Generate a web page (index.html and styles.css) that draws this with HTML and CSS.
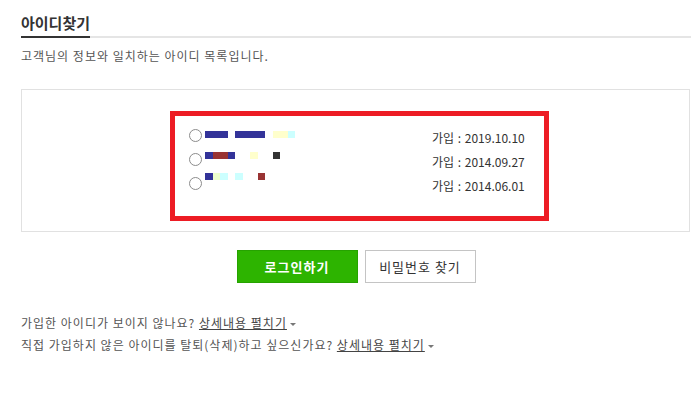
FILE: index.html
```html
<!DOCTYPE html>
<html>
<head>
  <title>아이디찾기</title>
  <link rel="stylesheet" href="styles.css">
</head>
<body>
  <div class="wrap">
    <div class="title-bar">
      <h2 class="title">아이디찾기</h2>
    </div>
    <p class="desc">고객님의 정보와 일치하는 아이디 목록입니다.</p>

    <div class="result-box">
      <div class="id-list">
        <div class="radios">
          <input type="radio" name="userId" class="pick">
          <input type="radio" name="userId" class="pick">
          <input type="radio" name="userId" class="pick">
        </div>

        <!-- masked ids -->
        <div class="mosaic">
          <div class="m-row">
            <span class="c b"></span><span class="c b"></span><span class="c b"></span><span class="c"></span>
            <span class="c b"></span><span class="c b"></span><span class="c b"></span><span class="c b"></span>
            <span class="c"></span><span class="c y"></span><span class="c y"></span><span class="c a"></span>
          </div>
          <div class="m-row">
            <span class="c b"></span><span class="c r"></span><span class="c r"></span><span class="c b"></span>
            <span class="c"></span><span class="c"></span><span class="c y"></span><span class="c"></span>
            <span class="c"></span><span class="c k"></span>
          </div>
          <div class="m-row">
            <span class="c b"></span><span class="c g"></span><span class="c a"></span><span class="c"></span>
            <span class="c a"></span><span class="c"></span><span class="c"></span><span class="c r"></span>
          </div>
        </div>

        <ul class="dates">
          <li>가입 : 2019.10.10</li>
          <li>가입 : 2014.09.27</li>
          <li>가입 : 2014.06.01</li>
        </ul>
      </div>
    </div>

    <div class="buttons">
      <button type="button" class="btn btn-login">로그인하기</button>
      <button type="button" class="btn btn-pw">비밀번호 찾기</button>
    </div>

    <div class="help">
      <p>가입한 아이디가 보이지 않나요? <a href="#" class="more">상세내용 펼치기</a></p>
      <p>직접 가입하지 않은 아이디를 탈퇴(삭제)하고 싶으신가요? <a href="#" class="more">상세내용 펼치기</a></p>
    </div>
  </div>
</body>
</html>
```

FILE: styles.css
```css
body {
  margin: 0;
  padding: 0;
  background-color: #FFFFFF;
  font-family: "Noto Sans CJK KR", "Noto Sans", sans-serif;
  font-size: 12px;
  color: #555555;
}

.wrap {
  padding: 0 6px 0 21px;
}

.title-bar {
  border-bottom: 2px solid #E5E5E5;
}

.title {
  display: inline-block;
  margin: 0 0 -2px 0;
  padding: 13px 0 3px 0;
  font-size: 15px;
  line-height: 20px;
  letter-spacing: 0;
  font-weight: bold;
  color: #333333;
  border-bottom: 2px solid #333333;
}

.desc {
  margin: 9px 0 0 0;
  line-height: 18px;
  letter-spacing: 1px;
}

.result-box {
  margin: 24px 1px 0 0;
  padding: 21px 140px 10px 148px;
  border: 1px solid #E1E1E1;
}

.id-list {
  display: flex;
  align-items: flex-start;
  padding: 0 0 18px 14px;
  border: 5px solid #ED1C24;
}

.radios {
  display: flex;
  flex-direction: column;
  gap: 11px;
  margin-top: 13px;
}

.pick {
  appearance: none;
  -webkit-appearance: none;
  width: 13px;
  height: 13px;
  margin: 0;
  border: 1px solid #8C8C8C;
  border-radius: 50%;
  background: #FFFFFF;
}

.mosaic {
  display: flex;
  flex-direction: column;
  gap: 14px;
  width: 227px;
  margin: 15px 0 0 3px;
}

.m-row {
  display: flex;
  height: 7px;
}

.c {
  display: block;
  width: 7.5px;
  height: 7px;
}

.c.b { background-color: #333399; }
.c.r { background-color: #993333; }
.c.y { background-color: #FFFFCC; }
.c.a { background-color: #CCFFFF; }
.c.g { background-color: #EEFFCC; }
.c.k { background-color: #333333; }

.dates {
  list-style: none;
  margin: 10px 0 0 0;
  padding: 0;
  line-height: 24px;
  color: #333333;
  white-space: nowrap;
  word-spacing: 1px;
}

.buttons {
  display: flex;
  justify-content: center;
  gap: 7px;
  margin-top: 18px;
}

.btn {
  height: 33px;
  padding: 0;
  border-radius: 0;
  font-family: "Noto Sans CJK KR", "Noto Sans", sans-serif;
  font-size: 13px;
  letter-spacing: 1px;
  cursor: pointer;
}

.btn-login {
  width: 121px;
  background-color: #2DB400;
  border: 1px solid #26A300;
  color: #FFFFFF;
  font-weight: bold;
}

.btn-pw {
  width: 111px;
  background-color: #FFFFFF;
  border: 1px solid #C4C4C4;
  color: #333333;
}

.help {
  margin-top: 29px;
}

.help p {
  margin: 0;
  line-height: 22px;
  letter-spacing: 1px;
}

.more {
  color: #444444;
  text-decoration: underline;
}

.more::after {
  content: "";
  display: inline-block;
  margin-left: 3px;
  vertical-align: middle;
  border-top: 3px solid #777777;
  border-left: 3px solid transparent;
  border-right: 3px solid transparent;
}
```
